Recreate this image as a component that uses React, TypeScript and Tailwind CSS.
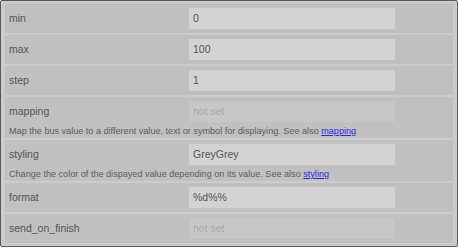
const font = { fontFamily: '"Liberation Sans", Arial, sans-serif' };

type Row = {
  label: string;
  value: string;
  placeholder?: boolean;
  desc?: string;
  link?: string;
};

const rows: Row[] = [
  { label: "min", value: "0" },
  { label: "max", value: "100" },
  { label: "step", value: "1" },
  {
    label: "mapping",
    value: "not set",
    placeholder: true,
    desc: "Map the bus value to a different value, text or symbol for displaying. See also ",
    link: "mapping",
  },
  {
    label: "styling",
    value: "GreyGrey",
    desc: "Change the color of the dispayed value depending on its value. See also ",
    link: "styling",
  },
  { label: "format", value: "%d%%" },
  { label: "send_on_finish", value: "not set", placeholder: true },
];

export default function App() {
  return (
    <div className="w-[458px] h-[248px] bg-white" style={font}>
      <div className="h-[247px] border border-[#5a5a5a] rounded-[2px] bg-[#c9c9c9] px-[2px] pt-[1px] flex flex-col">
        {rows.map((r) => (
          <div
            key={r.label}
            className="bg-[#c0c0c0] border-2 border-t-0 border-[#cbcbcb] flex flex-col first:border-t-2"
          >
            <div className="flex items-center h-[29px]">
              <span className="pl-[4px] w-[184px] text-[10.5px] text-[#555]">{r.label}</span>
              <div
                className={`w-[206px] h-[21px] flex items-center px-[4px] text-[10.5px] ${
                  r.placeholder ? "bg-[#c6c6c6] text-[#a8a8a8]" : "bg-[#d3d3d3] text-[#555]"
                }`}
              >
                {r.value}
              </div>
            </div>
            {r.desc && (
              <div className="pl-[4px] h-[12px] text-[9.1px] leading-[11px] text-[#5e5e5e]">
                {r.desc}
                <a href="#" className="text-[#2a2ae0] underline">
                  {r.link}
                </a>
              </div>
            )}
          </div>
        ))}
      </div>
    </div>
  );
}
